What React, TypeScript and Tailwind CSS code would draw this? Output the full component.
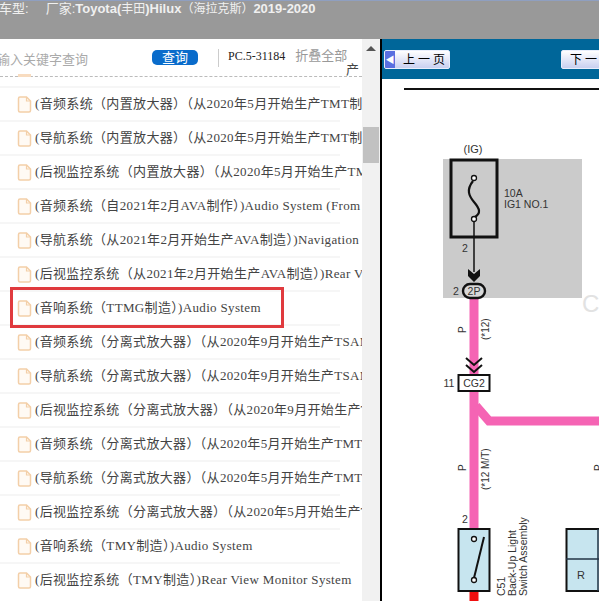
import React from 'react';

const rows = [
  '(音频系统（内置放大器）（从2020年5月开始生产TMT制造）)Audio System',
  '(导航系统（内置放大器）（从2020年5月开始生产TMT制造）)Navigation System',
  '(后视监控系统（内置放大器）（从2020年5月开始生产TMT制造）)Rear View',
  '(音频系统（自2021年2月AVA制作）)Audio System (From February 2021)',
  '(导航系统（从2021年2月开始生产AVA制造）)Navigation System',
  '(后视监控系统（从2021年2月开始生产AVA制造）)Rear View Monitor',
  '(音响系统（TTMG制造）)Audio System',
  '(音频系统（分离式放大器）（从2020年9月开始生产TSAM制造）)Audio',
  '(导航系统（分离式放大器）（从2020年9月开始生产TSAM制造）)Navigation',
  '(后视监控系统（分离式放大器）（从2020年9月开始生产TSAM制造）)',
  '(音频系统（分离式放大器）（从2020年5月开始生产TMT制造）)Audio',
  '(导航系统（分离式放大器）（从2020年5月开始生产TMT制造）)Navigation',
  '(后视监控系统（分离式放大器）（从2020年5月开始生产TMT制造）)',
  '(音响系统（TMY制造）)Audio System',
  '(后视监控系统（TMY制造）)Rear View Monitor System',
];

function FileIcon() {
  return (
    <svg width="15" height="17" viewBox="0 0 15 17" className="shrink-0">
      <path d="M1.5 2.5 Q1.5 1 3 1 L9.5 1 L13.5 5 L13.5 14.5 Q13.5 16 12 16 L3 16 Q1.5 16 1.5 14.5 Z" fill="#fffaf4" stroke="#f3cfa8" strokeWidth="1.5" />
      <path d="M9.5 1 L9.5 5 L13.5 5" fill="none" stroke="#f3cfa8" strokeWidth="1.2" />
    </svg>
  );
}

function PageButton({ label, arrow }: { label: string; arrow?: boolean }) {
  return (
    <div className="flex h-[19px] w-[66px] items-stretch overflow-hidden rounded-[2px] border border-[#e8eefc] bg-gradient-to-b from-white to-[#c9d0f0] text-[12px] leading-[18px] text-black">
      {arrow && (
        <div className="flex w-[10px] shrink-0 items-center justify-center bg-[#5a6fe0] text-[9px] text-white">◀</div>
      )}
      <span className="whitespace-pre pl-[8px]">{label}</span>
    </div>
  );
}

function Diagram() {
  return (
    <svg viewBox="382 79 217 522" className="block h-[522px] w-[217px]" fontFamily="'Liberation Sans', sans-serif" fill="#333">
      <line x1="404" y1="89" x2="599" y2="89" stroke="#111" strokeWidth="2" />
      <rect x="443" y="159" width="139" height="139" fill="#cbcbcb" />
      <text x="473" y="153" fontSize="11" textAnchor="middle">(IG)</text>
      <rect x="451" y="160" width="46" height="77" fill="none" stroke="#111" strokeWidth="3" />
      <path d="M473 181 C466 190 469 196 474 202 C480 209 481 213 475 217" fill="none" stroke="#111" strokeWidth="2.2" />
      <circle cx="474" cy="178" r="2.5" fill="#fff" stroke="#111" strokeWidth="1.3" />
      <circle cx="474" cy="219" r="2.5" fill="#fff" stroke="#111" strokeWidth="1.3" />
      <text x="504" y="197" fontSize="10.5">10A</text>
      <text x="504" y="208" fontSize="10.5">IG1 NO.1</text>
      <line x1="474" y1="221" x2="474" y2="272" stroke="#111" strokeWidth="1.5" />
      <path d="M468 269 L474 274 L480 269 L480 276 L474 282 L468 276 Z" fill="#111" />
      <text x="465" y="252" fontSize="10.5" textAnchor="middle">2</text>
      <text x="456" y="295" fontSize="10.5" textAnchor="middle">2</text>
      <rect x="469.5" y="298" width="9" height="76" fill="#f564b4" />
      <rect x="463" y="284" width="22" height="14" rx="7" fill="#d8d8d8" stroke="#111" strokeWidth="2.4" />
      <text x="474" y="295" fontSize="10.5" textAnchor="middle">2P</text>
      <text x="0" y="0" fontSize="10" transform="translate(466 333) rotate(-90)">P</text>
      <text x="0" y="0" fontSize="10" transform="translate(489 340) rotate(-90)">(*12)</text>
      <text x="582" y="312" fontSize="24" fill="#e2e2e2">C</text>
      <path d="M466 358 L474 365 L482 358 M466 365 L474 372 L482 365" fill="none" stroke="#111" strokeWidth="2" />
      <rect x="458.5" y="375" width="31" height="16" fill="#fff" stroke="#111" strokeWidth="2" />
      <text x="474" y="387" fontSize="10.5" textAnchor="middle">CG2</text>
      <text x="449" y="387" fontSize="10.5" textAnchor="middle">11</text>
      <rect x="469.5" y="392" width="9" height="137" fill="#f564b4" />
      <path d="M476 406 L489 421 L599 421" fill="none" stroke="#f564b4" strokeWidth="9" />
      <text x="0" y="0" fontSize="10" transform="translate(466 471) rotate(-90)">P</text>
      <text x="0" y="0" fontSize="10" transform="translate(489 490) rotate(-90)">(*12 M/T)</text>
      <text x="0" y="0" fontSize="10" transform="translate(602 471) rotate(-90)">P</text>
      <text x="465" y="523" fontSize="10.5" textAnchor="middle">2</text>
      <rect x="458.5" y="529" width="31" height="62" fill="#c7e5ef" stroke="#111" strokeWidth="2" />
      <circle cx="474" cy="539" r="2.5" fill="#fff" stroke="#111" strokeWidth="1.3" />
      <circle cx="474" cy="580" r="2.5" fill="#fff" stroke="#111" strokeWidth="1.3" />
      <line x1="484" y1="537" x2="474" y2="578" stroke="#111" strokeWidth="2" />
      <rect x="469.5" y="592" width="9" height="9" fill="#f01010" />
      <text x="0" y="0" fontSize="10.5" transform="translate(505 596) rotate(-90)">C51</text>
      <text x="0" y="0" fontSize="10.5" transform="translate(516 596) rotate(-90)">Back-Up Light</text>
      <text x="0" y="0" fontSize="10.5" transform="translate(527 596) rotate(-90)">Switch Assembly</text>
      <rect x="566.5" y="529" width="40" height="62" fill="#c7e5ef" stroke="#111" strokeWidth="2" />
      <line x1="566" y1="559" x2="599" y2="559" stroke="#234" strokeWidth="1.5" />
      <line x1="598" y1="529" x2="598" y2="591" stroke="#234" strokeWidth="1.5" />
      <text x="581" y="579" fontSize="11" textAnchor="middle">R</text>
    </svg>
  );
}

export default function App() {
  return (
    <div className="relative flex h-[601px] w-[599px] flex-col overflow-hidden bg-white font-['Liberation_Serif','Noto_Sans_CJK_SC',serif]">
      {/* 상단 차종 바 */}
      <div className="h-[39px] shrink-0 overflow-hidden whitespace-pre border-t border-[#8f9fc0] bg-[#999999] font-['Liberation_Sans','Noto_Sans_CJK_SC',sans-serif] text-[13px] font-bold leading-[15px] text-[#f0f0f0]">
        <span className="ml-[-1px] font-normal">车型:</span>
        <span className="ml-[17px] font-normal">厂家:</span>Toyota(<span className="text-[12px] font-normal">丰田</span>)Hilux<span className="text-[12px] font-normal">（海拉克斯）</span>2019-2020
      </div>

      <div className="flex min-h-0 flex-1">
        <div className="relative flex w-[362px] shrink-0 flex-col overflow-hidden">
          {/* 검색줄 */}
          <div className="flex h-[38px] shrink-0 items-center overflow-hidden whitespace-nowrap border-b border-dashed border-[#bbbbbb] text-[13px]">
            <span className="ml-[-3px] w-[155px] shrink-0 pt-[4px] text-[#aaaaaa]">输入关键字查询</span>
            <div className="h-[15px] w-[46px] shrink-0 rounded-[5px] bg-[#0a6ccb] text-center leading-[15px] text-white">查询</div>
            <div className="ml-[20px] h-[18px] w-px shrink-0 bg-[#cccccc]" />
            <span className="ml-[9px] mt-[-3px] text-[12px] text-[#222222]">PC.5-31184</span>
            <span className="ml-[10px] mt-[-3px] text-[#999999]">折叠全部</span>
          </div>
          {/* 검색줄 뒤로 비치는 이전 행 */}
          <span className="absolute left-[346px] top-[24px] text-[13px] leading-[13px] text-[#444444]">产</span>
          <div className="absolute left-[18px] top-[35px] h-[3px] w-[13px] bg-[#f8dcc0]" />

          {/* 목록 */}
          <div className="mt-[9px] min-h-0 flex-1 overflow-hidden">
            {rows.map((row) => (
              <div key={row} className="flex h-[34px] w-[340px] items-center gap-[3px] border-t-2 border-[#f6f6f6] pl-[17px] text-[13px] tracking-[0.34px] text-[#444444]">
                <FileIcon />
                <span className="whitespace-nowrap">{row}</span>
              </div>
            ))}
          </div>
        </div>

        {/* 스크롤바 */}
        <div className="flex w-[18px] shrink-0 flex-col items-center bg-[#f1f1f1]">
          <div className="mt-[7px] h-0 w-0 border-x-[5px] border-b-[5px] border-x-transparent border-b-[#555555]" />
          <div className="mt-[76px] h-[36px] w-[16px] bg-[#c1c1c1]" />
        </div>
        <div className="w-[2px] shrink-0 bg-black" />

        {/* 회로도 영역 */}
        <div className="flex min-w-0 flex-1 flex-col overflow-hidden">
          <div className="flex h-[40px] shrink-0 items-start justify-between whitespace-nowrap bg-[#006699] pl-[2px] pt-[11px]">
            <PageButton label="上 一 页" arrow />
            <div className="w-[38px] overflow-hidden">
              <PageButton label="下 一 页" />
            </div>
          </div>
          <Diagram />
        </div>
      </div>

      {/* 빨간 강조 박스 */}
      <div className="pointer-events-none absolute left-[10px] top-[287px] h-[41px] w-[274px] border-[3px] border-[#e03a3e]" />
    </div>
  );
}
